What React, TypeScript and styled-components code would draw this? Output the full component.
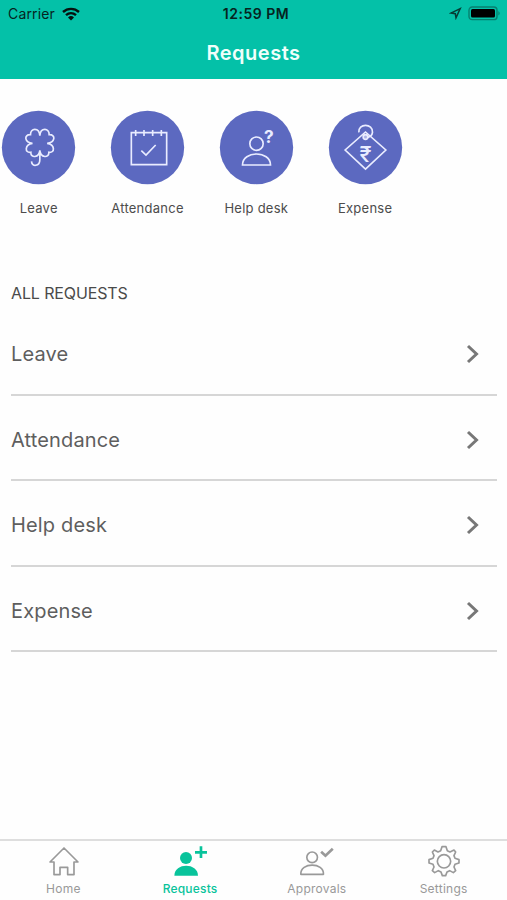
import React from "react";
import styled, { createGlobalStyle } from "styled-components";

const GlobalStyle = createGlobalStyle`
  * { box-sizing: border-box; }
  body { margin: 0; background: #fefefe; font-family: Inter, "Liberation Sans", sans-serif; }
`;

const Screen = styled.div`
  display: flex;
  flex-direction: column;
  width: 507px;
  height: 900px;
  overflow: hidden;
  background: #fefefe;
`;

const Header = styled.header`
  flex: none;
  height: 79px;
  background: #04c1a8;
`;

const StatusBar = styled.div`
  display: grid;
  grid-template-columns: 1fr auto 1fr;
  align-items: center;
  height: 27px;
  padding: 0 6px 0 8px;
  color: #06241f;
`;

const StatusLeft = styled.div`
  display: flex;
  align-items: center;
  gap: 7px;
  font-size: 14px;
  line-height: 27px;
  letter-spacing: 0.15px;
`;

const Clock = styled.div`
  font-size: 14px;
  font-weight: 600;
  line-height: 27px;
  letter-spacing: 0.5px;
  padding-left: 3px;
`;

const StatusRight = styled.div`
  display: flex;
  align-items: center;
  justify-content: flex-end;
  gap: 6px;
`;

const Title = styled.h1`
  margin: 0;
  height: 52px;
  font-size: 20px;
  font-weight: 600;
  line-height: 52px;
  letter-spacing: 0.5px;
  text-align: center;
  color: #effffb;
`;

const Shortcuts = styled.div`
  display: grid;
  flex: none;
  grid-template-columns: repeat(4, 108.8px);
  height: 188px;
  margin-left: -15.7px;
  padding-top: 31px;
`;

const Shortcut = styled.div`
  display: flex;
  flex-direction: column;
  align-items: center;
  gap: 13px;
`;

const ShortcutLabel = styled.span`
  font-size: 13px;
  line-height: 20px;
  letter-spacing: 0.25px;
  color: #4c4c4c;
`;

const Badge = styled.svg`
  display: block;
  width: 75px;
  height: 75px;
  fill: none;
  stroke: #e9ecff;
  stroke-width: 5;
`;

const Glyph = styled.text<{ $size: number; $weight: number }>`
  font-size: ${(p) => p.$size}px;
  font-weight: ${(p) => p.$weight};
  fill: #e9ecff;
  stroke: none;
  text-anchor: middle;
`;

const Content = styled.main`
  flex: 1;
  padding: 13px 10px 0 11px;
`;

const SectionTitle = styled.h2`
  margin: 0;
  height: 30px;
  font-size: 16px;
  font-weight: 400;
  line-height: 26px;
  letter-spacing: -0.12px;
  color: #4a4a4a;
`;

const Row = styled.div`
  display: flex;
  align-items: center;
  justify-content: space-between;
  height: 85.6px;
  padding: 5px 16px 0 0;
  border-bottom: 2px solid #d6d6d6;
  font-size: 20px;
  font-weight: 400;
  letter-spacing: 0.15px;
  color: #5e5e5e;
`;

const Chevron = styled.svg`
  width: 16px;
  height: 22px;
  fill: none;
  stroke: #777;
  stroke-width: 3;
`;

const TabBar = styled.nav`
  display: grid;
  flex: none;
  grid-template-columns: repeat(4, 1fr);
  height: 61px;
  padding-top: 4px;
  border-top: 2px solid #dedede;
`;

const Tab = styled.div<{ $active?: boolean }>`
  display: flex;
  flex-direction: column;
  align-items: center;
  color: ${(p) => (p.$active ? "#08c39b" : "#999")};
  font-size: 12px;
  font-weight: ${(p) => (p.$active ? 500 : 400)};
  line-height: 21px;
  letter-spacing: ${(p) => (p.$active ? 0.2 : 0.25)}px;
`;

const TabIcon = styled.svg`
  display: block;
  width: 40px;
  height: 33.3px;
  fill: none;
  stroke: currentColor;
  stroke-width: 5;
`;

const shortcuts = [
  {
    label: "Leave",
    x: 3.5,
    icon: (
      <path d="M120 107C118 81 91 84 92 104C71 103 74 128 98 130C74 133 74 160 93 157C92 175 118 174 120 151C122 174 148 175 147 157C166 160 166 133 142 130C166 128 169 103 148 104C149 84 122 81 120 107ZM120 151V179C120 199 96 202 95 184" />
    ),
  },
  {
    label: "Attendance",
    x: 330,
    icon: (
      <>
        <path d="M394 98H500V194H394ZM407 90V108M432 90V108M458 90V108M484 90V108" />
        <path d="M424 152L438 165L467 135" />
      </>
    ),
  },
  {
    label: "Help desk",
    x: 26.5,
    icon: (
      <>
        <circle cx="139" cy="131" r="20" />
        <path d="M97 195C97 151 181 151 181 195Z" />
        <Glyph x="176" y="129" $size={52} $weight={700}>?</Glyph>
      </>
    ),
  },
  {
    label: "Expense",
    x: 353.5,
    icon: (
      <>
        <path d="M466 96L527 150L466 207L405 150Z" />
        <path d="M446 97C443 69 489 69 487 97C486 108 477 112 466 113" />
        <circle cx="466" cy="111" r="7" fill="#a9b1e4" />
        <Glyph x="466" y="185" $size={66} $weight={450}>₹</Glyph>
      </>
    ),
  },
];

const tabs = [
  {
    label: "Home",
    x: 130,
    icon: (
      <path
        strokeLinejoin="round"
        d="M193 54L151 96H163V134H181V112H204V134H223V96H235Z"
      />
    ),
  },
  {
    label: "Requests",
    x: 510,
    active: true,
    icon: (
      <>
        <g fill="currentColor" stroke="none">
          <circle cx="558" cy="84" r="18" />
          <path d="M523 137C523 97 594 97 594 137Z" />
        </g>
        <path strokeWidth="8" d="M585 67H621M603 49V84" />
      </>
    ),
  },
  {
    label: "Approvals",
    x: 140.6,
    icon: (
      <>
        <circle cx="186" cy="82" r="16" />
        <path strokeLinejoin="round" d="M152 133C150 96 222 96 220 133Z" />
        <path strokeWidth="8" d="M213 65L226 77L248 56" />
      </>
    ),
  },
  {
    label: "Settings",
    x: 521,
    icon: (
      <>
        <circle cx="581" cy="94" r="20" />
        <path
          strokeLinejoin="round"
          d="M575 50H587L591 62L599 66L611 60L616 66L611 77L614 85L626 89V99L614 103L611 111L616 122L609 128L598 122L590 126L586 137H576L572 126L564 122L553 128L546 122L551 111L548 103L536 99V89L548 85L551 77L546 66L552 60L563 66L571 62Z"
        />
      </>
    ),
  },
];

const WifiIcon = () => (
  <svg width="18" height="14" viewBox="0 0 18 14" fill="none" stroke="#06110f" strokeWidth="2.4">
    <path d="M1 5C5.6 0.8 12.4 0.8 17 5" />
    <path d="M4 8.2C7 5.5 11 5.5 14 8.2" />
    <path d="M6 10.4Q9 7.8 12 10.4L9 13.4Z" fill="#06110f" stroke="none" />
  </svg>
);

const LocationIcon = () => (
  <svg width="13" height="13" viewBox="0 0 13 13" fill="none" stroke="#063c34" strokeWidth="1.5">
    <path d="M11.2 1.6L1.8 6.1L6.3 6.7L7 10.8Z" />
  </svg>
);

const BatteryIcon = () => (
  <svg width="33" height="15" viewBox="0 0 33 15">
    <rect x="1" y="1" width="28" height="12.6" rx="3.2" fill="none" stroke="#07806f" strokeWidth="1.4" />
    <rect x="3" y="3" width="24" height="8.6" rx="1.5" fill="#000" />
    <path d="M30.4 5Q33 7.3 30.4 9.6Z" fill="#07806f" />
  </svg>
);

export default function App() {
  return (
    <>
      <GlobalStyle />
      <Screen>
        <Header>
          <StatusBar>
            <StatusLeft>
              Carrier <WifiIcon />
            </StatusLeft>
            <Clock>12:59 PM</Clock>
            <StatusRight>
              <LocationIcon />
              <BatteryIcon />
            </StatusRight>
          </StatusBar>
          <Title>Requests</Title>
        </Header>
        <Shortcuts>
          {shortcuts.map((s) => (
            <Shortcut key={s.label}>
              <Badge viewBox={`${s.x} 30 225 225`}>
                <circle cx={s.x + 112.5} cy="142.5" r="110" fill="#5c69c0" stroke="none" />
                {s.icon}
              </Badge>
              <ShortcutLabel>{s.label}</ShortcutLabel>
            </Shortcut>
          ))}
        </Shortcuts>
        <Content>
          <SectionTitle>ALL REQUESTS</SectionTitle>
          {shortcuts.map((s) => (
            <Row key={s.label}>
              {s.label}
              <Chevron viewBox="0 0 16 22">
                <path d="M3 3L11.5 11L3 19" />
              </Chevron>
            </Row>
          ))}
        </Content>
        <TabBar>
          {tabs.map((t) => (
            <Tab key={t.label} $active={t.active}>
              <TabIcon viewBox={`${t.x} 45 120 100`}>{t.icon}</TabIcon>
              {t.label}
            </Tab>
          ))}
        </TabBar>
      </Screen>
    </>
  );
}
